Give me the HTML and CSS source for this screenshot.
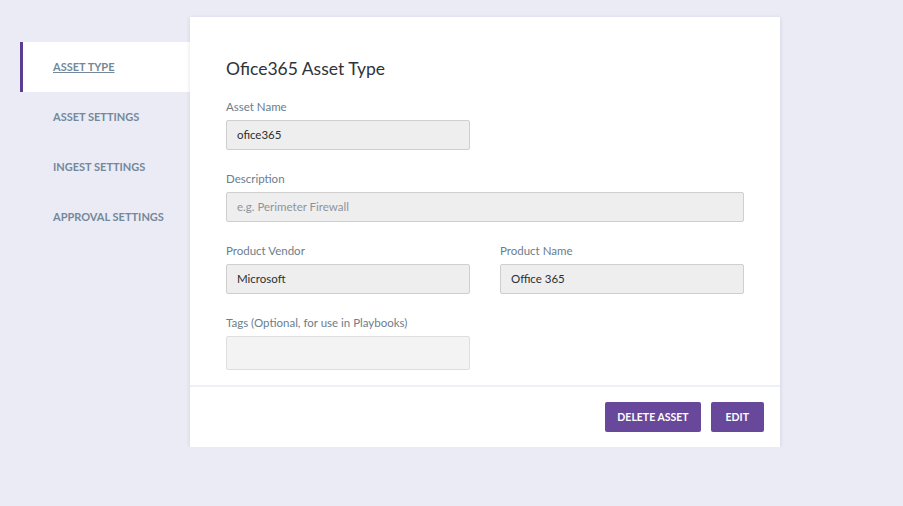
FILE: index.html
```html
<!DOCTYPE html>
<html>
<head>
<meta charset="utf-8">
<link rel="stylesheet" href="styles.css">
</head>
<body>
<div class="page">
  <nav class="sidebar">
    <a class="nav-item active">ASSET TYPE</a>
    <a class="nav-item">ASSET SETTINGS</a>
    <a class="nav-item">INGEST SETTINGS</a>
    <a class="nav-item">APPROVAL SETTINGS</a>
  </nav>
  <main class="card">
    <div class="form">
      <h1 class="title">Ofice365 Asset Type</h1>
      <div class="field">
        <label class="label">Asset Name</label>
        <div class="input half">ofice365</div>
      </div>
      <div class="field">
        <label class="label">Description</label>
        <div class="input placeholder">e.g. Perimeter Firewall</div>
      </div>
      <div class="row">
        <div class="field">
          <label class="label">Product Vendor</label>
          <div class="input">Microsoft</div>
        </div>
        <div class="field">
          <label class="label">Product Name</label>
          <div class="input">Office 365</div>
        </div>
      </div>
      <div class="field last">
        <label class="label">Tags (Optional, for use in Playbooks)</label>
        <div class="input half tags"></div>
      </div>
    </div>
    <div class="footer">
      <button class="btn">DELETE ASSET</button>
      <button class="btn btn-edit">EDIT</button>
    </div>
  </main>
</div>
</body>
</html>
```
FILE: styles.css
```css
html, body {
  margin: 0;
  padding: 0;
  background: #eaebf5;
  font-family: "Lato", "Liberation Sans", sans-serif;
}
.page {
  display: flex;
  padding-top: 17px;
}
.sidebar {
  margin-left: 20px;
  width: 170px;
  padding-top: 25px;
  display: flex;
  flex-direction: column;
}
.nav-item {
  display: block;
  height: 50px;
  line-height: 50px;
  padding-left: 33px;
  font-size: 11px;
  font-weight: 700;
  color: #74889a;
  border-left: 3px solid transparent;
  margin-left: -3px;
  box-sizing: border-box;
}
.nav-item.active {
  background: #ffffff;
  border-left-color: #5d3d91;
  margin-left: 0;
  padding-left: 30px;
  text-decoration: underline;
}
.card {
  width: 590px;
  height: 430px;
  background: #ffffff;
  box-shadow: 0 1px 4px rgba(40, 40, 80, 0.14);
  display: flex;
  flex-direction: column;
  box-sizing: border-box;
}
.form {
  padding: 41px 36px 15px 36px;
  border-bottom: 2px solid #edf1f5;
}
.title {
  margin: 0 0 19px 0;
  font-size: 17.5px;
  line-height: 22px;
  font-weight: 400;
  color: #2e3338;
}
.field {
  margin-bottom: 21px;
}
.field.last {
  margin-bottom: 0;
}
.label {
  display: block;
  font-size: 11.5px;
  line-height: 16px;
  color: #6c7d8c;
  margin-bottom: 5px;
}
.input {
  height: 30px;
  box-sizing: border-box;
  background: #eeeeee;
  border: 1px solid #cfcfcf;
  border-radius: 2px;
  padding: 0 10px;
  font-size: 11.5px;
  line-height: 28px;
  color: #2b2f33;
}
.input.half {
  width: 244px;
}
.input.placeholder {
  color: #8d959c;
}
.input.tags {
  height: 34px;
  background: #f3f3f3;
  border-color: #dedede;
}
.row {
  display: grid;
  grid-template-columns: 244px 244px;
  column-gap: 30px;
}
.footer {
  display: flex;
  justify-content: flex-end;
  gap: 10px;
  padding: 15px 16px 0 0;
}
.btn {
  height: 30px;
  border: none;
  border-radius: 2px;
  background: #68489a;
  color: #ffffff;
  font-family: "Lato", "Liberation Sans", sans-serif;
  font-weight: 700;
  font-size: 10.5px;
  padding: 0 12px;
  cursor: pointer;
}
.btn-edit {
  padding: 0 15px;
}
```
